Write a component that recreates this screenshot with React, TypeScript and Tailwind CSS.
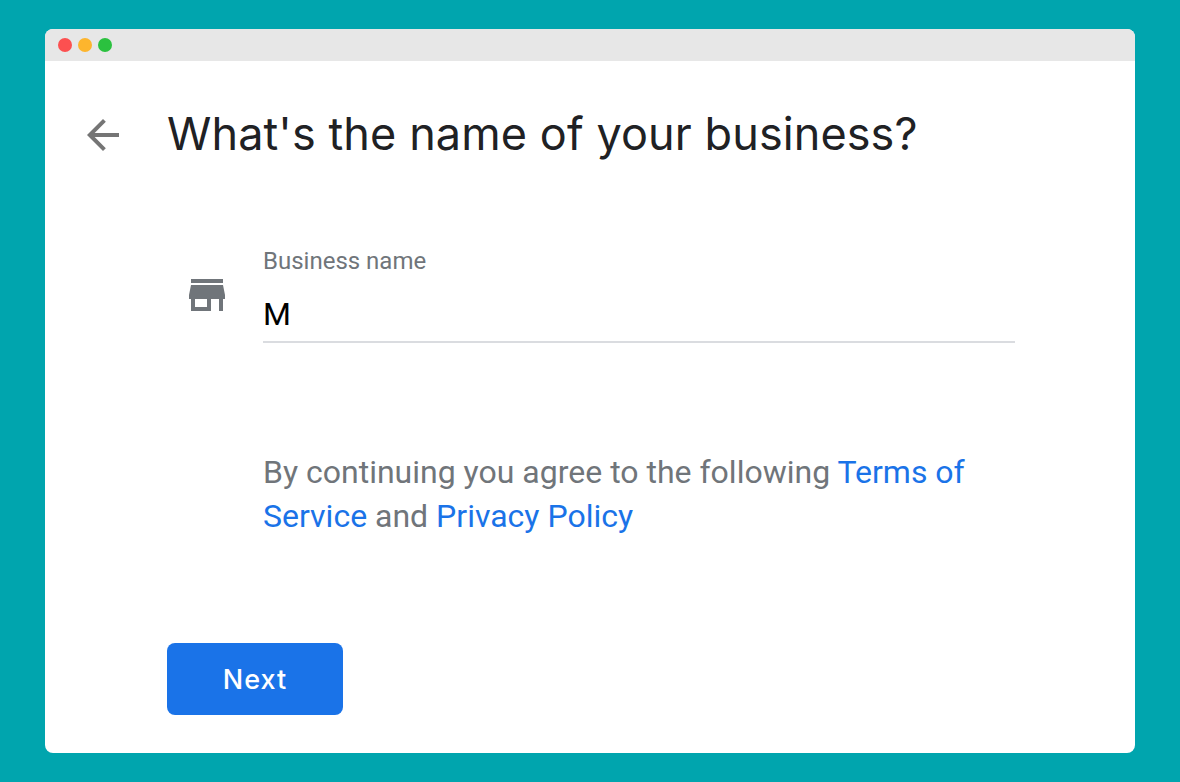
export default function App() {
  return (
    <div className="w-[1180px] h-[782px] bg-[#00a5ae] pt-[29px] pl-[45px] font-['Roboto',sans-serif] overflow-hidden">
      <div className="w-[1090px] h-[724px] bg-white rounded-lg overflow-hidden flex flex-col">
        <div className="h-8 shrink-0 bg-[#e7e7e7] flex items-center pl-[13px] gap-[6px]">
          <span className="w-[14px] h-[14px] rounded-full bg-[#fc5050]" />
          <span className="w-[14px] h-[14px] rounded-full bg-[#fdb52d]" />
          <span className="w-[14px] h-[14px] rounded-full bg-[#2bc13f]" />
        </div>

        <div className="flex items-center mt-[50px] pl-[34px] h-12">
          <svg width="48" height="48" viewBox="0 0 24 24" fill="#757575">
            <path d="M20 11H7.83l5.59-5.59L12 4l-8 8 8 8 1.41-1.41L7.83 13H20v-2z" />
          </svg>
          <h1 className="ml-[40px] -mt-[2px] text-[45px] tracking-[0.1px] leading-[48px] text-[#202124] font-['Inter',sans-serif] whitespace-nowrap">What's the name of your business?</h1>
        </div>

        <div className="flex mt-[87px] pl-[138px]">
          <svg className="mt-[25px]" width="48" height="48" viewBox="0 0 24 24" fill="#70757a">
            <path d="M20 4H4v2h16V4zm1 10v-2l-1-5H4l-1 5v2h1v6h10v-6h4v6h2v-6h1zm-9 4H6v-4h6v4z" />
          </svg>
          <div className="ml-[32px] w-[752px] border-b-2 border-[#dadce0] h-[97px]">
            <div className="text-[24px] leading-[30px] text-[#70757a]">Business name</div>
            <div className="text-[32px] leading-[40px] text-black mt-[18px]">M</div>
          </div>
        </div>

        <p className="ml-[218px] mt-[107px] w-[760px] text-[32px] leading-[44px] text-[#70757a]">
          By continuing you agree to the following <a className="text-[#1a73e8]">Terms of Service</a> and <a className="text-[#1a73e8]">Privacy Policy</a>
        </p>

        <button className="ml-[122px] mt-[105px] w-[176px] h-[72px] rounded-lg bg-[#1a73e8] text-white text-[27px] pt-[2px] font-medium tracking-[1px] font-['Inter',sans-serif]">Next</button>
      </div>
    </div>
  );
}
